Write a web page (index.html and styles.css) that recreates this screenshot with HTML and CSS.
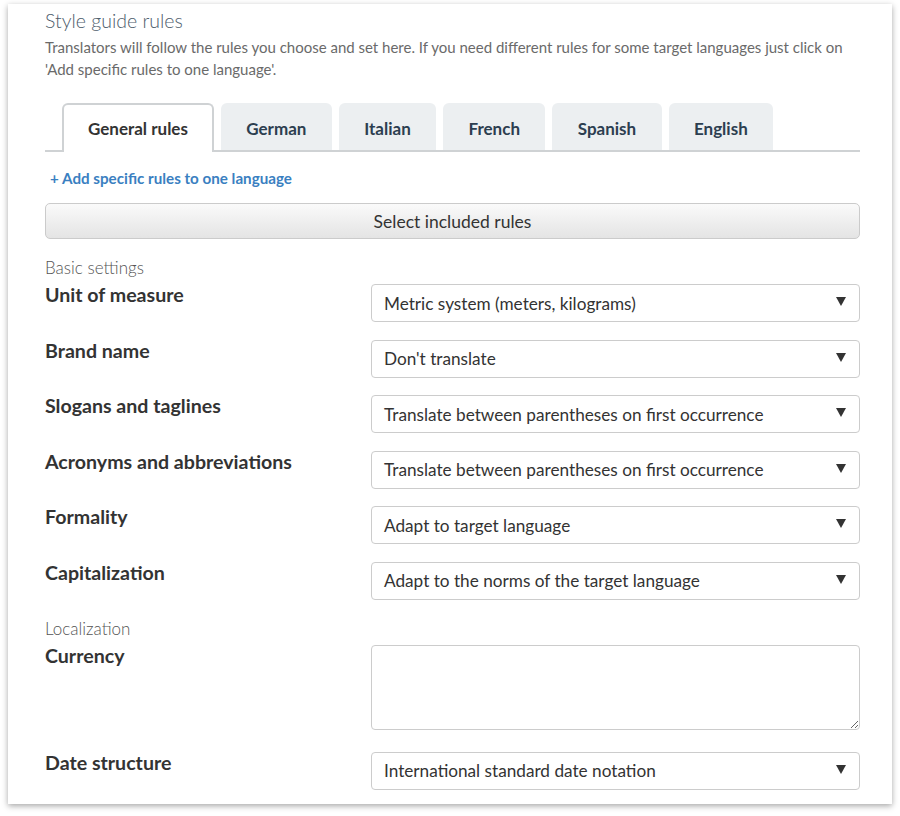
FILE: index.html
```html
<!DOCTYPE html>
<html lang="en">
<head>
<meta charset="utf-8">
<title>Style guide rules</title>
<link rel="stylesheet" href="styles.css">
</head>
<body>
<div class="card">
  <h1 class="title">Style guide rules</h1>
  <p class="desc">Translators will follow the rules you choose and set here. If you need different rules for some target languages just click on 'Add specific rules to one language'.</p>

  <div class="tabs">
    <div class="tab active">General rules</div>
    <div class="tab">German</div>
    <div class="tab">Italian</div>
    <div class="tab">French</div>
    <div class="tab">Spanish</div>
    <div class="tab">English</div>
  </div>

  <a class="add-link" href="#">+ Add specific rules to one language</a>

  <div class="btn">Select included rules</div>

  <div class="section">Basic settings</div>
  <div class="rows">
    <div class="row"><div class="label">Unit of measure</div><div class="select"><span>Metric system (meters, kilograms)</span><svg class="arrow" viewBox="0 0 10 9"><path d="M0 0H10L5 9Z"/></svg></div></div>
    <div class="row"><div class="label">Brand name</div><div class="select"><span>Don't translate</span><svg class="arrow" viewBox="0 0 10 9"><path d="M0 0H10L5 9Z"/></svg></div></div>
    <div class="row"><div class="label">Slogans and taglines</div><div class="select"><span>Translate between parentheses on first occurrence</span><svg class="arrow" viewBox="0 0 10 9"><path d="M0 0H10L5 9Z"/></svg></div></div>
    <div class="row"><div class="label">Acronyms and abbreviations</div><div class="select"><span>Translate between parentheses on first occurrence</span><svg class="arrow" viewBox="0 0 10 9"><path d="M0 0H10L5 9Z"/></svg></div></div>
    <div class="row"><div class="label">Formality</div><div class="select"><span>Adapt to target language</span><svg class="arrow" viewBox="0 0 10 9"><path d="M0 0H10L5 9Z"/></svg></div></div>
    <div class="row"><div class="label">Capitalization</div><div class="select"><span>Adapt to the norms of the target language</span><svg class="arrow" viewBox="0 0 10 9"><path d="M0 0H10L5 9Z"/></svg></div></div>
  </div>

  <div class="section loc">Localization</div>
  <div class="rows">
    <div class="row tall"><div class="label">Currency</div><textarea class="textarea"></textarea></div>
    <div class="row"><div class="label">Date structure</div><div class="select"><span>International standard date notation</span><svg class="arrow" viewBox="0 0 10 9"><path d="M0 0H10L5 9Z"/></svg></div></div>
  </div>
</div>
</body>
</html>
```

FILE: styles.css
```css
* { box-sizing: border-box; }
html, body { margin: 0; padding: 0; background: #fff; }
body {
  font-family: "Lato", "Open Sans", sans-serif;
  color: #333;
  width: 900px;
  height: 816px;
  overflow: hidden;
}
.card {
  margin: 4px 8px 0 8px;
  width: 884px;
  height: 800px;
  background: #fff;
  box-shadow: 0 2px 6px rgba(0,0,0,0.35);
  padding: 5px 32px 0 37px;
}
.title {
  margin: 0;
  font-size: 19.5px;
  line-height: 24px;
  font-weight: 300;
  color: #4e5d6c;
}
.desc {
  margin: 3px 0 0 0;
  font-size: 15px;
  line-height: 22px;
  color: #6a6a6a;
}
.tabs {
  display: flex;
  gap: 7px;
  margin-top: 23px;
  padding-left: 17px;
  border-bottom: 2px solid #cfd2d4;
  height: 49px;
}
.tab {
  height: 47px;
  padding: 3px 25.4px 0 25.4px;
  display: flex;
  align-items: center;
  justify-content: center;
  font-size: 17px;
  font-weight: 700;
  color: #2c3e50;
  background: #eceff1;
  border-radius: 6px 6px 0 0;
}
.tab.active {
  background: #fff;
  color: #333;
  border: 2px solid #cfd2d4;
  border-bottom: none;
  height: 49px;
  padding: 0 24px;
  margin-bottom: -2px;
}
.add-link {
  display: block;
  margin: 15px 0 0 5px;
  font-size: 15.2px;
  line-height: 22px;
  font-weight: 700;
  color: #3a7fc1;
  text-decoration: none;
}
.btn {
  margin-top: 14px;
  height: 36px;
  border: 1px solid #cbcbcb;
  border-radius: 5px;
  background: linear-gradient(#fafafa, #e4e4e4);
  display: flex;
  align-items: center;
  justify-content: center;
  font-size: 17.5px;
  color: #333;
}
.section {
  margin-top: 19px;
  font-size: 17px;
  line-height: 20px;
  font-weight: 300;
  color: #555;
}
.section.loc { margin-top: 19px; }
.rows {
  display: flex;
  flex-direction: column;
  gap: 17.6px;
  margin-top: 6px;
}
.row {
  display: grid;
  grid-template-columns: 326px 1fr;
  align-items: start;
}
.label {
  font-size: 19.6px;
  line-height: 22px;
  font-weight: 700;
  color: #333;
}
.select {
  height: 38px;
  border: 1px solid #ccc;
  border-radius: 4px;
  display: flex;
  align-items: center;
  justify-content: space-between;
  padding: 0 13px 0 12px;
  font-size: 17.2px;
  color: #333;
  background: #fff;
}
.arrow { width: 10px; height: 9px; fill: #333; margin-top: -3px; }
.textarea {
  height: 85px;
  border: 1px solid #ccc;
  border-radius: 4px;
  width: 100%;
  font-family: inherit;
  margin: 0;
  display: block;
}
.row.tall + .row { margin-top: 4px; }
```
